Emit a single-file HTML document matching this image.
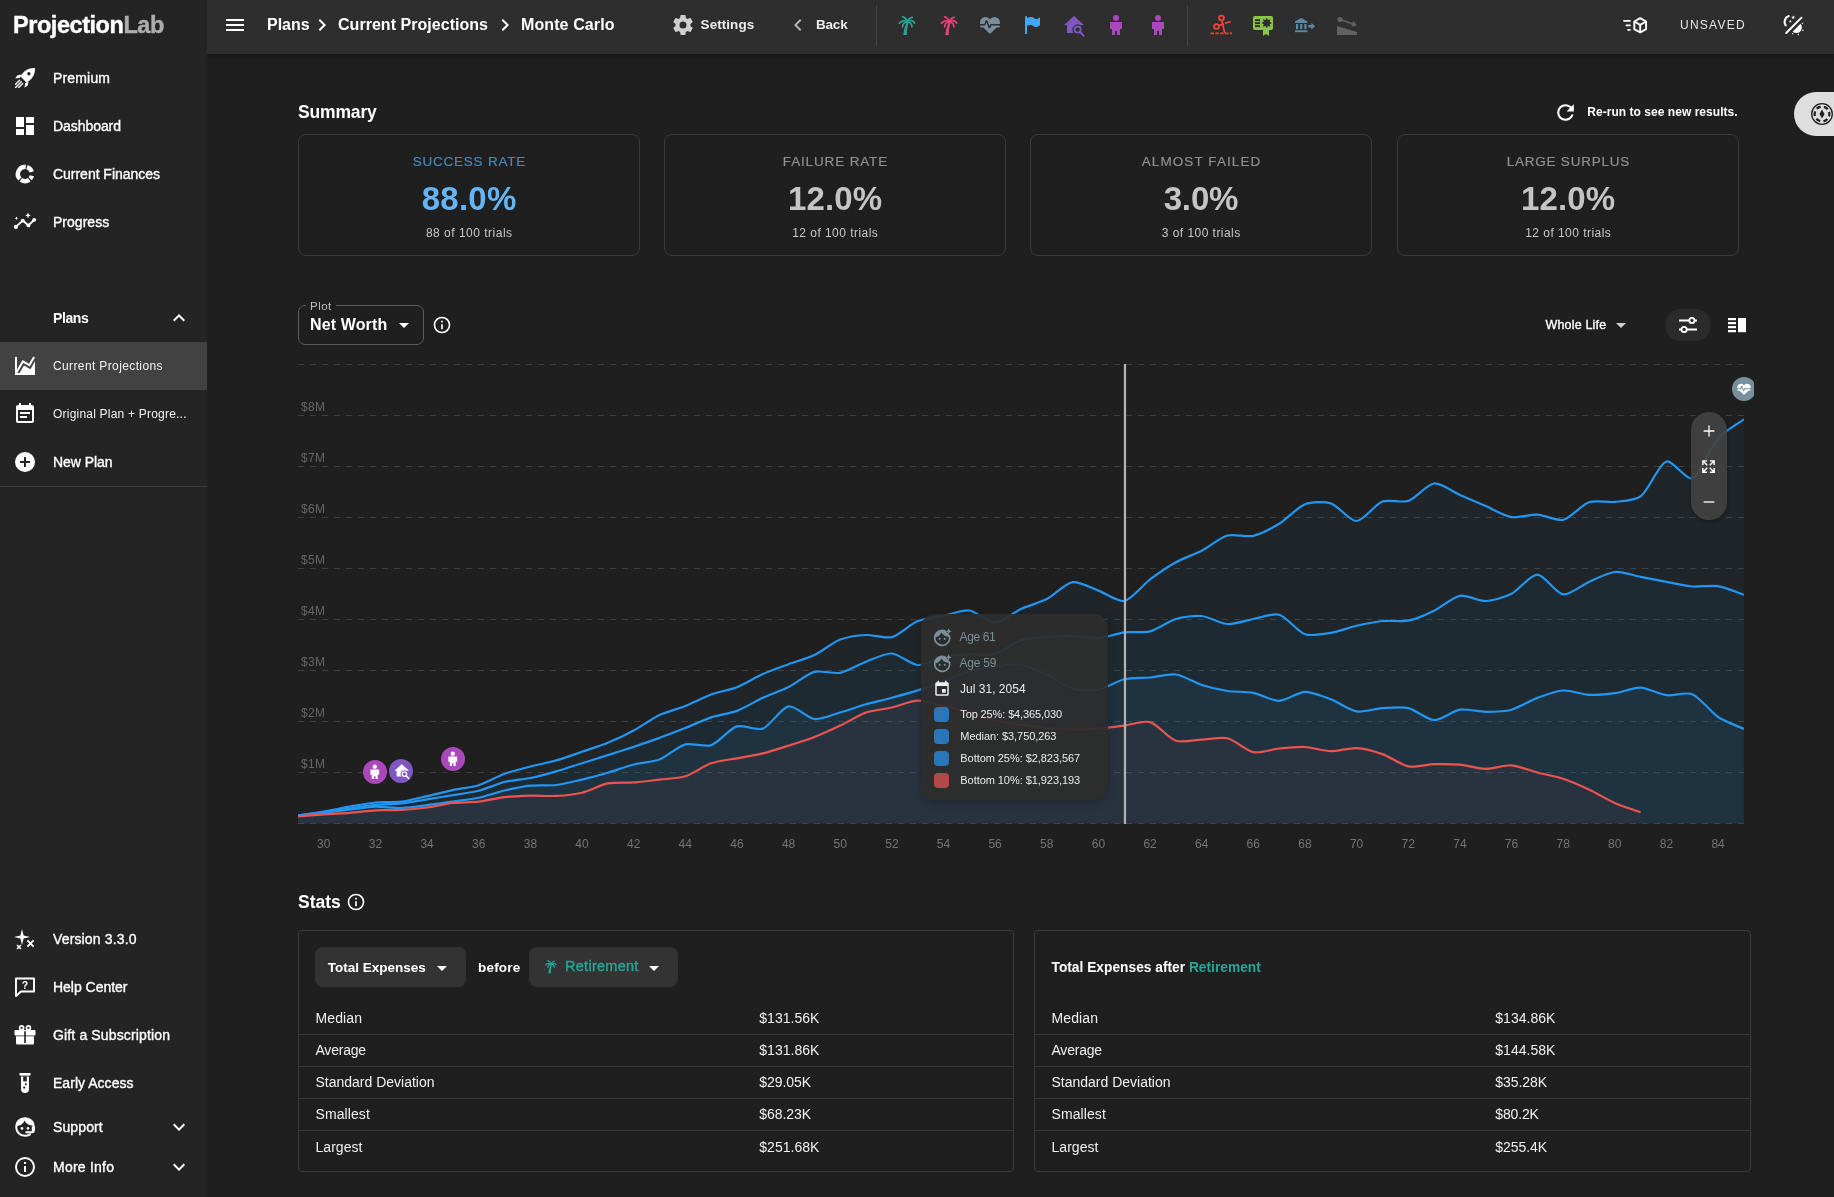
<!DOCTYPE html><html lang="en"><head><meta charset="utf-8"><title>ProjectionLab - Monte Carlo</title><style>
*{box-sizing:border-box;margin:0;padding:0}
html,body{width:1834px;height:1197px;overflow:hidden;background:#1f1f1f}
body{position:relative;font-family:"Liberation Sans",sans-serif;color:#fff;font-size:14px;-webkit-font-smoothing:antialiased}
.ic{position:absolute;display:block;overflow:visible}
.a{position:absolute;white-space:nowrap;line-height:1}
.t{position:absolute;white-space:nowrap;line-height:20px;height:20px;margin-top:-10px}
.m{-webkit-text-stroke:0.35px currentColor}
.m2{-webkit-text-stroke:0.2px currentColor}
.b{font-weight:700}
#sb{position:absolute;left:0;top:0;width:207px;height:1197px;background:#242424;z-index:5}
#tb{position:absolute;left:207px;top:0;width:1627px;height:54px;background:#2e2e2e;box-shadow:0 2px 4px -1px rgba(0,0,0,.2),0 4px 5px 0 rgba(0,0,0,.14),0 1px 10px 0 rgba(0,0,0,.12)}
#root{position:absolute;left:0;top:0;width:1834px;height:1197px;overflow:hidden;will-change:transform}
.card{position:absolute;border:1px solid #3b3b3b;border-radius:8px}
.ctr{position:absolute;left:0;right:0;text-align:center;white-space:nowrap;line-height:20px;height:20px;margin-top:-10px}
.row{position:absolute;left:0;right:0;height:1px;background:#383838}
.btn{position:absolute;background:#333;border-radius:8px}
</style></head><body><div id="root">
<div id="sb">
<div class="t b" style="left:13px;top:25px;font-size:23.5px;letter-spacing:-0.45px;line-height:30px;height:30px;margin-top:-15px;-webkit-text-stroke:0.4px currentColor">Projection<span style="color:#adadad">Lab</span></div>
<svg class="ic" style="left:13.0px;top:66.0px;" width="24" height="24" viewBox="0 0 24 24"><path d="M22,2 C15.5,1.8 10,5 7.6,10.6 L13.4,16.4 C19,14 22.2,8.5 22,2 Z" fill="#fff"/><circle cx="15.9" cy="7.8" r="1.7" fill="#242424"/><path d="M8.6,8.4 L4.4,9.3 L2.2,12.5 L7,11.8 Z M15.6,15.4 L14.7,19.6 L11.5,21.8 L12.2,17 Z" fill="#fff"/><path d="M6.6,14.3 L2.6,18.3 M8.2,15.8 L2.6,21.4 M9.7,17.4 L5.7,21.4" stroke="#fff" stroke-width="1.35" stroke-linecap="round" fill="none"/></svg>
<div class="t m" style="left:53px;top:78px;font-size:14px;letter-spacing:0.164px">Premium</div>
<svg class="ic" style="left:13.0px;top:114.0px;" width="24" height="24" viewBox="0 0 24 24"><path d="M13,3V9H21V3M13,21H21V11H13M3,21H11V15H3M3,13H11V3H3V13Z" fill="#fff"/></svg>
<div class="t m" style="left:53px;top:126px;font-size:14px;letter-spacing:-0.062px">Dashboard</div>
<svg class="ic" style="left:13.0px;top:162.0px;" width="24" height="24" viewBox="0 0 24 24"><path d="M13.96,5.18 A7.1,7.1 0 0,1 18.75,9.81 M18.89,13.72 A7.1,7.1 0 0,1 17.19,16.84 M16.27,17.67 A7.1,7.1 0 0,1 7.83,17.74 M6.89,16.93 A7.1,7.1 0 0,1 12.74,4.94" fill="none" stroke="#fff" stroke-width="4.4"/></svg>
<div class="t m" style="left:53px;top:174px;font-size:14px;letter-spacing:-0.026px">Current Finances</div>
<svg class="ic" style="left:13.0px;top:210.0px;" width="24" height="24" viewBox="0 0 24 24"><path d="M2.8,16.9 L9.75,10.6 L15.45,15.4 L21.3,9.8" stroke="#fff" stroke-width="1.9" fill="none" stroke-linejoin="round" stroke-linecap="round"/><circle cx="2.9" cy="16.9" r="2.1" fill="#fff"/><circle cx="9.75" cy="10.6" r="1.9" fill="#fff"/><circle cx="15.45" cy="15.4" r="1.9" fill="#fff"/><circle cx="21.2" cy="9.8" r="1.9" fill="#fff"/><path d="M15,2.6 l0.85,1.95 1.95,0.85 -1.95,0.85 -0.85,1.95 -0.85,-1.95 -1.95,-0.85 1.95,-0.85 Z" fill="#fff"/><path d="M3.4,6.4 l0.55,1.25 1.25,0.55 -1.25,0.55 -0.55,1.25 -0.55,-1.25 -1.25,-0.55 1.25,-0.55 Z" fill="#fff"/></svg>
<div class="t m" style="left:53px;top:222px;font-size:14px;letter-spacing:0.024px">Progress</div>
<div class="t b" style="left:53px;top:318px;font-size:14px;letter-spacing:-0.415px">Plans</div>
<svg class="ic" style="left:167.0px;top:306.0px;" width="24" height="24" viewBox="0 0 24 24"><path d="M7.41,15.41L12,10.83L16.59,15.41L18,14L12,8L6,14L7.41,15.41Z" fill="#fff"/></svg>
<div style="position:absolute;left:0;top:342px;width:207px;height:48px;background:#424242"></div>
<svg class="ic" style="left:13.0px;top:354.0px;" width="24" height="24" viewBox="0 0 24 24"><path d="M17.45,15.18L22,7.31V19L22,21H2V3H4V15.54L9.5,6L16,9.78L20.24,2.45L21.97,3.45L16.74,12.5L10.23,8.75L4.31,19H6.57L10.96,11.44L17.45,15.18Z" fill="#fff"/></svg>
<div class="t " style="left:53px;top:366px;font-size:12px;color:#f2f2f2;letter-spacing:0.377px">Current Projections</div>
<svg class="ic" style="left:13.0px;top:402.0px;" width="24" height="24" viewBox="0 0 24 24"><path d="M14,14H7V16H14M19,19H5V8H19M19,3H18V1H16V3H8V1H6V3H5C3.89,3 3,3.9 3,5V19A2,2 0 0,0 5,21H19A2,2 0 0,0 21,19V5A2,2 0 0,0 19,3M17,10H7V12H17V10Z" fill="#fff"/></svg>
<div class="t " style="left:53px;top:414px;font-size:12px;color:#f2f2f2;letter-spacing:0.212px">Original Plan + Progre...</div>
<svg class="ic" style="left:13.0px;top:450.0px;" width="24" height="24" viewBox="0 0 24 24"><path d="M17,13H13V17H11V13H7V11H11V7H13V11H17M12,2A10,10 0 0,0 2,12A10,10 0 0,0 12,22A10,10 0 0,0 22,12A10,10 0 0,0 12,2Z" fill="#fff"/></svg>
<div class="t m" style="left:53px;top:462px;font-size:14px;letter-spacing:-0.060px">New Plan</div>
<div style="position:absolute;left:0;top:486px;width:207px;height:1px;background:#3d3d3d"></div>
<svg class="ic" style="left:13.0px;top:927.0px;" width="24" height="24" viewBox="0 0 24 24"><path d="M9,2 L10.6,8.4 L17,10 L10.6,11.6 L9,18 L7.4,11.6 L1,10 L7.4,8.4 Z" fill="#fff"/><path d="M14.4,13.4 L20.6,19.6 M20.6,13.4 L14.4,19.6" stroke="#fff" stroke-width="1.8" fill="none"/><path d="M4,18 L8,22 M8,18 L4,22" stroke="#fff" stroke-width="1.5" fill="none"/></svg>
<div class="t m" style="left:53px;top:939px;font-size:14px;letter-spacing:0.147px">Version 3.3.0</div>
<svg class="ic" style="left:13.0px;top:975.0px;" width="24" height="24" viewBox="0 0 24 24"><path d="M3,3.5 H21 V16.5 H8 L3,21 Z" fill="none" stroke="#fff" stroke-width="1.9" stroke-linejoin="round"/><text x="12" y="13.6" font-family="Liberation Sans, sans-serif" font-weight="700" font-size="10.5" text-anchor="middle" fill="#fff">?</text></svg>
<div class="t m" style="left:53px;top:987px;font-size:14px;letter-spacing:-0.020px">Help Center</div>
<svg class="ic" style="left:13.0px;top:1023.0px;" width="24" height="24" viewBox="0 0 24 24"><rect x="1.5" y="7" width="21" height="5.4" rx="0.8" fill="#fff"/><path d="M3,13.2 H21 V20 A1.6,1.6 0 0,1 19.4,21.6 H4.6 A1.6,1.6 0 0,1 3,20 Z" fill="#fff"/><rect x="11.2" y="8.2" width="1.6" height="11.8" fill="#242424"/><circle cx="8.6" cy="4.8" r="2" fill="none" stroke="#fff" stroke-width="1.7"/><circle cx="15.4" cy="4.8" r="2" fill="none" stroke="#fff" stroke-width="1.7"/></svg>
<div class="t m" style="left:53px;top:1035px;font-size:14px;letter-spacing:0.145px">Gift a Subscription</div>
<svg class="ic" style="left:13.0px;top:1071.0px;" width="24" height="24" viewBox="0 0 24 24"><rect x="6.5" y="2" width="11" height="2.6" fill="#fff"/><path d="M8,5.4 H16 V18 A4,4 0 0,1 8,18 Z" fill="#fff"/><rect x="10.2" y="5.4" width="3.6" height="5" fill="#242424"/><circle cx="12.8" cy="13.2" r="1" fill="#242424"/><circle cx="11.2" cy="16.6" r="1.1" fill="#242424"/></svg>
<div class="t m" style="left:53px;top:1083px;font-size:14px;letter-spacing:0.033px">Early Access</div>
<svg class="ic" style="left:13.0px;top:1115.0px;" width="24" height="24" viewBox="0 0 24 24"><path d="M12,3.2 C6.6,3.2 3.2,7 3.2,12 C3.2,17 6.8,20.8 12,20.8 C14,20.8 15.6,20.3 17,19.4" fill="none" stroke="#fff" stroke-width="2" stroke-linecap="round"/><path d="M12,3.2 C17.4,3.2 20.8,7 20.8,12 V15" fill="none" stroke="#fff" stroke-width="2"/><path d="M3.4,11 C7.5,10.8 10.4,8.6 11.4,5.4 C13.2,8.8 16.6,10.8 20.6,10.6 L20.6,7 L14,3 L7,4 L3.4,8 Z" fill="#fff"/><circle cx="9" cy="13.4" r="1.3" fill="#fff"/><circle cx="15" cy="13.4" r="1.3" fill="#fff"/><path d="M12.5,18.2 H19.4 A2.4,2.4 0 0,0 21.8,15.8 V11.5 H18.8 V16.2 H12.5 Z" fill="#fff"/></svg>
<div class="t m" style="left:53px;top:1127px;font-size:14px;letter-spacing:0.109px">Support</div>
<svg class="ic" style="left:13.0px;top:1155.0px;" width="24" height="24" viewBox="0 0 24 24"><path d="M11,9H13V7H11M12,20C7.59,20 4,16.41 4,12C4,7.59 7.59,4 12,4C16.41,4 20,7.59 20,12C20,16.41 16.41,20 12,20M12,2A10,10 0 0,0 2,12A10,10 0 0,0 12,22A10,10 0 0,0 22,12A10,10 0 0,0 12,2M11,17H13V11H11V17Z" fill="#fff"/></svg>
<div class="t m" style="left:53px;top:1167px;font-size:14px;letter-spacing:0.232px">More Info</div>
<svg class="ic" style="left:167.0px;top:1115.0px;" width="24" height="24" viewBox="0 0 24 24"><path d="M7.41,8.58L12,13.17L16.59,8.58L18,10L12,16L6,10L7.41,8.58Z" fill="#fff"/></svg>
<svg class="ic" style="left:167.0px;top:1155.0px;" width="24" height="24" viewBox="0 0 24 24"><path d="M7.41,8.58L12,13.17L16.59,8.58L18,10L12,16L6,10L7.41,8.58Z" fill="#fff"/></svg>
</div>
<div id="tb"></div>
<svg class="ic" style="left:223.0px;top:13.0px;" width="24" height="24" viewBox="0 0 24 24"><path d="M3,6H21V8H3V6M3,11H21V13H3V11M3,16H21V18H3V16Z" fill="#fff"/></svg>
<div class="t b" style="left:267px;top:25px;font-size:16px;letter-spacing:0.003px">Plans</div>
<svg class="ic" style="left:310.0px;top:13.0px;" width="24" height="24" viewBox="0 0 24 24"><path d="M8.59,16.58L13.17,12L8.59,7.41L10,6L16,12L10,18L8.59,16.58Z" fill="#fff"/></svg>
<div class="t b" style="left:338px;top:25px;font-size:16px;letter-spacing:0.036px">Current Projections</div>
<svg class="ic" style="left:493.0px;top:13.0px;" width="24" height="24" viewBox="0 0 24 24"><path d="M8.59,16.58L13.17,12L8.59,7.41L10,6L16,12L10,18L8.59,16.58Z" fill="#fff"/></svg>
<div class="t b" style="left:521px;top:25px;font-size:16px;letter-spacing:0.105px">Monte Carlo</div>
<svg class="ic" style="left:671.0px;top:13.0px;" width="24" height="24" viewBox="0 0 24 24"><path d="M12,15.5A3.5,3.5 0 0,1 8.5,12A3.5,3.5 0 0,1 12,8.5A3.5,3.5 0 0,1 15.5,12A3.5,3.5 0 0,1 12,15.5M19.43,12.97C19.47,12.65 19.5,12.33 19.5,12C19.5,11.67 19.47,11.34 19.43,11L21.54,9.37C21.73,9.22 21.78,8.95 21.66,8.73L19.66,5.27C19.54,5.05 19.27,4.96 19.05,5.05L16.56,6.05C16.04,5.66 15.5,5.32 14.87,5.07L14.5,2.42C14.46,2.18 14.25,2 14,2H10C9.75,2 9.54,2.18 9.5,2.42L9.13,5.07C8.5,5.32 7.96,5.66 7.44,6.05L4.95,5.05C4.73,4.96 4.46,5.05 4.34,5.27L2.34,8.73C2.21,8.95 2.27,9.22 2.46,9.37L4.57,11C4.53,11.34 4.5,11.67 4.5,12C4.5,12.33 4.53,12.65 4.57,12.97L2.46,14.63C2.27,14.78 2.21,15.05 2.34,15.27L4.34,18.73C4.46,18.95 4.73,19.03 4.95,18.95L7.44,17.94C7.96,18.34 8.5,18.68 9.13,18.93L9.5,21.58C9.54,21.82 9.75,22 10,22H14C14.25,22 14.46,21.82 14.5,21.58L14.87,18.93C15.5,18.67 16.04,18.34 16.56,17.94L19.05,18.95C19.27,19.03 19.54,18.95 19.66,18.73L21.66,15.27C21.78,15.05 21.73,14.78 21.54,14.63L19.43,12.97Z" fill="#cfcfcf"/></svg>
<div class="t b" style="left:700.6px;top:24.8px;font-size:13.5px;color:#ececec;letter-spacing:0.048px">Settings</div>
<svg class="ic" style="left:786.3px;top:13.0px;" width="24" height="24" viewBox="0 0 24 24"><path d="M15.41,16.58L10.83,12L15.41,7.41L14,6L8,12L14,18L15.41,16.58Z" fill="#b4b4b4"/></svg>
<div class="t b" style="left:816px;top:24.8px;font-size:13.5px;color:#ececec;letter-spacing:-0.194px">Back</div>
<div style="position:absolute;left:876px;top:5px;width:1px;height:41px;background:#454545"></div>
<svg class="ic" style="left:894.0px;top:13.0px;" width="24" height="24" viewBox="0 0 24 24"><g fill="none" stroke="#26a69a" stroke-width="1.7" stroke-linecap="round"><path d="M13.3,9 C11,7 7.4,7.4 5.4,10.2"/><path d="M13.3,9 C10.6,9 8.8,11 8.6,13.8"/><path d="M13.3,9 C15.4,6.9 18.9,7.2 20.6,10"/><path d="M13.3,9 C16.1,9.2 17.8,11.2 17.9,13.8"/><path d="M13.3,9 C12.8,6.5 11,4.5 8.6,3.8"/><path d="M13.3,9 C14,6.6 15.8,4.9 18.2,4.4"/></g><path d="M9.2,22 C9.9,17 11.2,12.6 12.6,9.3 L14.5,10 C13.4,13.4 12.7,17.6 12.8,22 Z" fill="#26a69a"/></svg>
<svg class="ic" style="left:936.0px;top:13.0px;" width="24" height="24" viewBox="0 0 24 24"><g fill="none" stroke="#ec407a" stroke-width="1.7" stroke-linecap="round"><path d="M13.3,9 C11,7 7.4,7.4 5.4,10.2"/><path d="M13.3,9 C10.6,9 8.8,11 8.6,13.8"/><path d="M13.3,9 C15.4,6.9 18.9,7.2 20.6,10"/><path d="M13.3,9 C16.1,9.2 17.8,11.2 17.9,13.8"/><path d="M13.3,9 C12.8,6.5 11,4.5 8.6,3.8"/><path d="M13.3,9 C14,6.6 15.8,4.9 18.2,4.4"/></g><path d="M9.2,22 C9.9,17 11.2,12.6 12.6,9.3 L14.5,10 C13.4,13.4 12.7,17.6 12.8,22 Z" fill="#ec407a"/></svg>
<svg class="ic" style="left:978.0px;top:13.0px;" width="24" height="24" viewBox="0 0 24 24"><path d="M7.5,4A5.5,5.5 0 0,0 2,9.5C2,10 2.09,10.5 2.22,11H6.3L7.57,7.63C7.87,6.83 9.05,6.75 9.43,7.63L11.5,13L12.09,11.58C12.22,11.25 12.57,11 13,11H21.78C21.91,10.5 22,10 22,9.5A5.5,5.5 0 0,0 16.5,4C14.64,4 13,4.93 12,6.34C11,4.93 9.36,4 7.5,4V4M3,12.5A1,1 0 0,0 2,13.5A1,1 0 0,0 3,14.5H5.44L11,20C12,20.9 12,20.9 13,20L18.56,14.5H21A1,1 0 0,0 22,13.5A1,1 0 0,0 21,12.5H13.4L12.47,14.8C12.07,15.81 10.92,15.67 10.55,14.83L8.5,9.5L7.54,11.83C7.39,12.21 7.05,12.5 6.6,12.5H3Z" fill="#78909c"/></svg>
<svg class="ic" style="left:1020.0px;top:13.0px;" width="24" height="24" viewBox="0 0 24 24"><path d="M6,3A1,1 0 0,1 7,4V4.88C8.06,4.44 9.5,4 11,4C14,4 14,6 16,6C19,6 20,4 20,4V12C20,12 19,14 16,14C13,14 13,12 11,12C8,12 7,13 7,13V21H5V4A1,1 0 0,1 6,3Z" fill="#42a5f5"/></svg>
<svg class="ic" style="left:1062.0px;top:13.0px;" width="24" height="24" viewBox="0 0 24 24"><path d="M12,3 L2,12 H5 V20 H13 V14 H19 V12 H22 Z" fill="#7e57c2"/><circle cx="15.7" cy="16.6" r="5.3" fill="#2e2e2e"/><circle cx="15.7" cy="16.6" r="3.1" fill="none" stroke="#7e57c2" stroke-width="1.8"/><path d="M18,19 L21.6,22.6" stroke="#7e57c2" stroke-width="2" stroke-linecap="round"/></svg>
<svg class="ic" style="left:1104.0px;top:13.0px;" width="24" height="24" viewBox="0 0 24 24"><path d="M12,2A3,3 0 0,1 15,5A3,3 0 0,1 12,8A3,3 0 0,1 9,5A3,3 0 0,1 12,2M11,22H8V16H6V9H18V16H16V22H13V18H11V22Z" fill="#ab47bc"/></svg>
<svg class="ic" style="left:1146.0px;top:13.0px;" width="24" height="24" viewBox="0 0 24 24"><path d="M12,2A3,3 0 0,1 15,5A3,3 0 0,1 12,8A3,3 0 0,1 9,5A3,3 0 0,1 12,2M11,22H8V16H6V9H18V16H16V22H13V18H11V22Z" fill="#ab47bc"/></svg>
<div style="position:absolute;left:1187px;top:5px;width:1px;height:41px;background:#454545"></div>
<svg class="ic" style="left:1209.0px;top:13.0px;" width="24" height="24" viewBox="0 0 24 24"><g fill="none" stroke="#f44336" stroke-width="1.8" stroke-linecap="round"><circle cx="12.5" cy="5" r="2.4"/><circle cx="7.5" cy="13.5" r="2.4"/><path d="M12.8,7.6 L15.6,19.4"/><path d="M9.8,12.6 L14.2,11"/><path d="M16.5,10 L21,8.8"/></g><path d="M1.6,20.4 H23" stroke="#f44336" stroke-width="1.8" stroke-dasharray="3.4 1.4" fill="none"/></svg>
<svg class="ic" style="left:1251.0px;top:13.0px;" width="24" height="24" viewBox="0 0 24 24"><rect x="2" y="3" width="20" height="14" rx="2" fill="#8bc34a"/><path d="M12,17 L12,23 L15,21 L18,23 L18,17 Z" fill="#8bc34a"/><rect x="4" y="6.2" width="5" height="1.9" fill="#2e2e2e"/><rect x="4" y="9.2" width="5" height="1.9" fill="#2e2e2e"/><rect x="4" y="12.2" width="5" height="1.9" fill="#2e2e2e"/><polygon points="15.70,4.70 16.92,7.04 19.45,6.25 18.66,8.78 21.00,10.00 18.66,11.22 19.45,13.75 16.92,12.96 15.70,15.30 14.48,12.96 11.95,13.75 12.74,11.22 10.40,10.00 12.74,8.78 11.95,6.25 14.48,7.04" fill="#2e2e2e"/></svg>
<svg class="ic" style="left:1293.0px;top:13.0px;" width="24" height="24" viewBox="0 0 24 24"><path d="M8.2,5 L2,8.6 V9.9 H14.4 V8.6 Z" fill="#5c8aa6"/><rect x="3" y="11" width="2.1" height="5.2" fill="#5c8aa6"/><rect x="7.15" y="11" width="2.1" height="5.2" fill="#5c8aa6"/><rect x="11.3" y="11" width="2.1" height="5.2" fill="#5c8aa6"/><rect x="2" y="17.3" width="12.4" height="1.9" fill="#5c8aa6"/><path d="M15.2,12 H18.4 V9.8 L22,13.2 L18.4,16.6 V14.4 H15.2 Z" fill="#5c8aa6"/></svg>
<svg class="ic" style="left:1335.0px;top:13.0px;" width="24" height="24" viewBox="0 0 24 24"><path d="M2,13 L22,19 V22 H2 Z" fill="#616161"/><circle cx="5" cy="6.5" r="2.6" fill="#616161"/><path d="M6,6.8 L19,11.6" stroke="#616161" stroke-width="1.6" fill="none"/><path d="M18.2,7.8 L22,12.6 L16.4,13.4 Z" fill="#616161"/></svg>
<svg class="ic" style="left:1623.0px;top:12.5px;" width="24" height="24" viewBox="0 0 24 24"><g fill="none" stroke="#fff" stroke-width="1.9" stroke-linejoin="round"><path d="M17.2,5.1 L23.1,8.5 V16.1 L17.2,19.5 L11.3,16.1 V8.5 Z"/><path d="M11.3,8.5 L17.2,11.9 L23.1,8.5 M17.2,11.9 V19.5"/></g><path d="M0.3,7.9 H7.6 M2.7,12.4 H7.6 M4.4,16.9 H7.6" stroke="#fff" stroke-width="1.9" fill="none"/></svg>
<div class="t " style="left:1680px;top:24.5px;font-size:12px;color:#e6e6e6;letter-spacing:1.246px">UNSAVED</div>
<svg class="ic" style="left:1782.0px;top:12.5px;" width="24" height="24" viewBox="0 0 24 24"><path d="M4.2,20 L19.5,4.7" stroke="#fff" stroke-width="1.9" stroke-linecap="round" fill="none"/><path d="M6.7,3.1 A6,6 0 0,0 3.7,12.3" fill="none" stroke="#fff" stroke-width="2.1" stroke-linecap="round"/><path d="M11.2,2.4 l0.55,1.3 1.4,0.1 -1.1,0.9 0.35,1.4 -1.2,-0.75 -1.2,0.75 0.35,-1.4 -1.1,-0.9 1.4,-0.1 Z" fill="#fff"/><path d="M8.3,6.9 l0.4,0.95 1,0.1 -0.8,0.65 0.3,1 -0.9,-0.55 -0.9,0.55 0.3,-1 -0.8,-0.65 1,-0.1 Z" fill="#fff"/><path d="M10.6,18.7 L18.5,10.8 A5.6,5.6 0 0,1 10.6,18.7 Z" fill="#fff"/><path d="M19.6,9.7 l1.7,0.3 -0.9,1.6 Z M20.9,16.2 l1,1.5 -1.8,0.3 Z M17,20.6 l-0.2,1.8 -1.5,-1 Z M11.6,20.5 l-1.2,1.3 -0.6,-1.7 Z" fill="#fff"/></svg>
<div style="position:absolute;left:1794px;top:92px;width:60px;height:44px;border-radius:22px;background:#dedede"></div>
<svg class="ic" style="left:1810.0px;top:102.0px;" width="24" height="24" viewBox="0 0 24 24"><circle cx="12" cy="12" r="10.3" fill="none" stroke="#1e1e1e" stroke-width="1.3"/><circle cx="12" cy="12" r="7.4" fill="none" stroke="#1e1e1e" stroke-width="2.2" stroke-dasharray="4.6 3.15" transform="rotate(-17 12 12)"/><path d="M12,7.4 L14.5,12 L12,16.6 L9.5,12 Z" fill="#1e1e1e"/></svg>
<div class="t b" style="left:298px;top:112px;font-size:17.5px;letter-spacing:-0.161px">Summary</div>
<svg class="ic" style="left:1552.7px;top:99.5px;" width="25" height="25" viewBox="0 0 24 24"><path d="M17.65,6.35C16.2,4.9 14.21,4 12,4A8,8 0 0,0 4,12A8,8 0 0,0 12,20C15.73,20 18.84,17.45 19.73,14H17.65C16.83,16.33 14.61,18 12,18A6,6 0 0,1 6,12A6,6 0 0,1 12,6C13.66,6 15.14,6.69 16.22,7.78L13,11H20V4L17.65,6.35Z" fill="#fff"/></svg>
<div class="t b" style="left:1587.3px;top:112px;font-size:12px;letter-spacing:0.037px">Re-run to see new results.</div>
<div class="card" style="left:298px;top:134px;width:342px;height:122px">
<div class="ctr m2" style="top:26.6px;padding-left:0.752px;font-size:13.5px;color:#4a86b8;letter-spacing:0.752px"><span>SUCCESS RATE</span></div>
<div class="ctr b" style="top:64px;padding-left:0.230px;font-size:33px;line-height:40px;height:40px;margin-top:-20px;color:#64b5f6;letter-spacing:0.230px"><span>88.0%</span></div>
<div class="ctr " style="top:98px;padding-left:0.499px;font-size:12px;color:#c8c8c8;letter-spacing:0.499px"><span>88 of 100 trials</span></div>
</div>
<div class="card" style="left:664px;top:134px;width:342px;height:122px">
<div class="ctr m2" style="top:26.6px;padding-left:0.852px;font-size:13.5px;color:#8f8f8f;letter-spacing:0.852px"><span>FAILURE RATE</span></div>
<div class="ctr b" style="top:64px;padding-left:0.105px;font-size:33px;line-height:40px;height:40px;margin-top:-20px;color:#c4c4c4;letter-spacing:0.105px"><span>12.0%</span></div>
<div class="ctr " style="top:98px;padding-left:0.459px;font-size:12px;color:#c8c8c8;letter-spacing:0.459px"><span>12 of 100 trials</span></div>
</div>
<div class="card" style="left:1030px;top:134px;width:342px;height:122px">
<div class="ctr m2" style="top:26.6px;padding-left:1.088px;font-size:13.5px;color:#8f8f8f;letter-spacing:1.088px"><span>ALMOST FAILED</span></div>
<div class="ctr b" style="top:64px;padding-left:-0.140px;font-size:33px;line-height:40px;height:40px;margin-top:-20px;color:#c4c4c4;letter-spacing:-0.140px"><span>3.0%</span></div>
<div class="ctr " style="top:98px;padding-left:0.454px;font-size:12px;color:#c8c8c8;letter-spacing:0.454px"><span>3 of 100 trials</span></div>
</div>
<div class="card" style="left:1397px;top:134px;width:342px;height:122px">
<div class="ctr m2" style="top:26.6px;padding-left:0.775px;font-size:13.5px;color:#8f8f8f;letter-spacing:0.775px"><span>LARGE SURPLUS</span></div>
<div class="ctr b" style="top:64px;padding-left:0.105px;font-size:33px;line-height:40px;height:40px;margin-top:-20px;color:#c4c4c4;letter-spacing:0.105px"><span>12.0%</span></div>
<div class="ctr " style="top:98px;padding-left:0.459px;font-size:12px;color:#c8c8c8;letter-spacing:0.459px"><span>12 of 100 trials</span></div>
</div>
<div style="position:absolute;left:298px;top:305px;width:126px;height:40px;border:1px solid #5c5c5c;border-radius:7px"></div>
<div style="position:absolute;left:306px;top:300px;width:30px;height:10px;background:#1f1f1f"></div>
<div class="t " style="left:310px;top:305.5px;font-size:11.5px;color:#bdbdbd;letter-spacing:0.491px">Plot</div>
<div class="t b" style="left:310px;top:324.5px;font-size:16px;letter-spacing:0.132px">Net Worth</div>
<svg class="ic" style="left:392.0px;top:313.0px;" width="24" height="24" viewBox="0 0 24 24"><path d="M7,10L12,15L17,10H7Z" fill="#fff"/></svg>
<svg class="ic" style="left:432.0px;top:315.0px;" width="20" height="20" viewBox="0 0 24 24"><path d="M11,9H13V7H11M12,20C7.59,20 4,16.41 4,12C4,7.59 7.59,4 12,4C16.41,4 20,7.59 20,12C20,16.41 16.41,20 12,20M12,2A10,10 0 0,0 2,12A10,10 0 0,0 12,22A10,10 0 0,0 22,12A10,10 0 0,0 12,2M11,17H13V11H11V17Z" fill="#fff"/></svg>
<div class="t m" style="left:1545.4px;top:325px;font-size:12.5px;letter-spacing:0.193px">Whole Life</div>
<svg class="ic" style="left:1609.0px;top:313.0px;" width="24" height="24" viewBox="0 0 24 24"><path d="M7,10L12,15L17,10H7Z" fill="#d0d0d0"/></svg>
<div style="position:absolute;left:1665px;top:309px;width:46px;height:32px;border-radius:16px;background:#2b2b2b"></div>
<svg class="ic" style="left:1675.5px;top:313.0px;" width="24" height="24" viewBox="0 0 24 24"><path d="M3,7.5 H12.9 M18.9,7.5 H21 M3,16.5 H5.1 M11.1,16.5 H21" stroke="#fff" stroke-width="1.9" fill="none"/><circle cx="15.9" cy="7.5" r="2.6" fill="none" stroke="#fff" stroke-width="1.8"/><circle cx="8.1" cy="16.5" r="2.6" fill="none" stroke="#fff" stroke-width="1.8"/></svg>
<svg class="ic" style="left:1724.5px;top:313.0px;" width="24" height="24" viewBox="0 0 24 24"><path d="M3,5 H11 V7.2 H3 Z M3,9 H11 V11.2 H3 Z M3,13 H11 V15.2 H3 Z M3,17 H11 V19.2 H3 Z" fill="#fff"/><rect x="13" y="5" width="8" height="14.2" fill="#fff"/></svg>
<svg class="ic" style="left:290px;top:355px" width="1470" height="505" viewBox="0 0 1470 505"><defs><clipPath id="plot"><rect x="8" y="0" width="1446" height="469"/></clipPath></defs><line x1="8" x2="1454" y1="468.5" y2="468.5" stroke="#3f3f3f" stroke-width="1" stroke-dasharray="6 6"/><line x1="8" x2="1454" y1="417.5" y2="417.5" stroke="#3f3f3f" stroke-width="1" stroke-dasharray="6 6"/><line x1="8" x2="1454" y1="366.5" y2="366.5" stroke="#3f3f3f" stroke-width="1" stroke-dasharray="6 6"/><line x1="8" x2="1454" y1="315.5" y2="315.5" stroke="#3f3f3f" stroke-width="1" stroke-dasharray="6 6"/><line x1="8" x2="1454" y1="264.5" y2="264.5" stroke="#3f3f3f" stroke-width="1" stroke-dasharray="6 6"/><line x1="8" x2="1454" y1="213.5" y2="213.5" stroke="#3f3f3f" stroke-width="1" stroke-dasharray="6 6"/><line x1="8" x2="1454" y1="162.5" y2="162.5" stroke="#3f3f3f" stroke-width="1" stroke-dasharray="6 6"/><line x1="8" x2="1454" y1="111.5" y2="111.5" stroke="#3f3f3f" stroke-width="1" stroke-dasharray="6 6"/><line x1="8" x2="1454" y1="60.5" y2="60.5" stroke="#3f3f3f" stroke-width="1" stroke-dasharray="6 6"/><line x1="8" x2="1454" y1="9.5" y2="9.5" stroke="#3f3f3f" stroke-width="1" stroke-dasharray="6 6"/><text x="11" y="413.0" font-size="12" letter-spacing="0.3" fill="#666" font-family="Liberation Sans, sans-serif">$1M</text><text x="11" y="362.0" font-size="12" letter-spacing="0.3" fill="#666" font-family="Liberation Sans, sans-serif">$2M</text><text x="11" y="311.0" font-size="12" letter-spacing="0.3" fill="#666" font-family="Liberation Sans, sans-serif">$3M</text><text x="11" y="260.0" font-size="12" letter-spacing="0.3" fill="#666" font-family="Liberation Sans, sans-serif">$4M</text><text x="11" y="209.0" font-size="12" letter-spacing="0.3" fill="#666" font-family="Liberation Sans, sans-serif">$5M</text><text x="11" y="158.0" font-size="12" letter-spacing="0.3" fill="#666" font-family="Liberation Sans, sans-serif">$6M</text><text x="11" y="107.0" font-size="12" letter-spacing="0.3" fill="#666" font-family="Liberation Sans, sans-serif">$7M</text><text x="11" y="56.0" font-size="12" letter-spacing="0.3" fill="#666" font-family="Liberation Sans, sans-serif">$8M</text><text x="33.8" y="493.20000000000005" font-size="12" fill="#747474" text-anchor="middle" font-family="Liberation Sans, sans-serif">30</text><text x="85.5" y="493.20000000000005" font-size="12" fill="#747474" text-anchor="middle" font-family="Liberation Sans, sans-serif">32</text><text x="137.1" y="493.20000000000005" font-size="12" fill="#747474" text-anchor="middle" font-family="Liberation Sans, sans-serif">34</text><text x="188.7" y="493.20000000000005" font-size="12" fill="#747474" text-anchor="middle" font-family="Liberation Sans, sans-serif">36</text><text x="240.4" y="493.20000000000005" font-size="12" fill="#747474" text-anchor="middle" font-family="Liberation Sans, sans-serif">38</text><text x="292.0" y="493.20000000000005" font-size="12" fill="#747474" text-anchor="middle" font-family="Liberation Sans, sans-serif">40</text><text x="343.7" y="493.20000000000005" font-size="12" fill="#747474" text-anchor="middle" font-family="Liberation Sans, sans-serif">42</text><text x="395.3" y="493.20000000000005" font-size="12" fill="#747474" text-anchor="middle" font-family="Liberation Sans, sans-serif">44</text><text x="446.9" y="493.20000000000005" font-size="12" fill="#747474" text-anchor="middle" font-family="Liberation Sans, sans-serif">46</text><text x="498.6" y="493.20000000000005" font-size="12" fill="#747474" text-anchor="middle" font-family="Liberation Sans, sans-serif">48</text><text x="550.2" y="493.20000000000005" font-size="12" fill="#747474" text-anchor="middle" font-family="Liberation Sans, sans-serif">50</text><text x="601.9" y="493.20000000000005" font-size="12" fill="#747474" text-anchor="middle" font-family="Liberation Sans, sans-serif">52</text><text x="653.5" y="493.20000000000005" font-size="12" fill="#747474" text-anchor="middle" font-family="Liberation Sans, sans-serif">54</text><text x="705.1" y="493.20000000000005" font-size="12" fill="#747474" text-anchor="middle" font-family="Liberation Sans, sans-serif">56</text><text x="756.8" y="493.20000000000005" font-size="12" fill="#747474" text-anchor="middle" font-family="Liberation Sans, sans-serif">58</text><text x="808.4" y="493.20000000000005" font-size="12" fill="#747474" text-anchor="middle" font-family="Liberation Sans, sans-serif">60</text><text x="860.1" y="493.20000000000005" font-size="12" fill="#747474" text-anchor="middle" font-family="Liberation Sans, sans-serif">62</text><text x="911.7" y="493.20000000000005" font-size="12" fill="#747474" text-anchor="middle" font-family="Liberation Sans, sans-serif">64</text><text x="963.3" y="493.20000000000005" font-size="12" fill="#747474" text-anchor="middle" font-family="Liberation Sans, sans-serif">66</text><text x="1015.0" y="493.20000000000005" font-size="12" fill="#747474" text-anchor="middle" font-family="Liberation Sans, sans-serif">68</text><text x="1066.6" y="493.20000000000005" font-size="12" fill="#747474" text-anchor="middle" font-family="Liberation Sans, sans-serif">70</text><text x="1118.3" y="493.20000000000005" font-size="12" fill="#747474" text-anchor="middle" font-family="Liberation Sans, sans-serif">72</text><text x="1169.9" y="493.20000000000005" font-size="12" fill="#747474" text-anchor="middle" font-family="Liberation Sans, sans-serif">74</text><text x="1221.5" y="493.20000000000005" font-size="12" fill="#747474" text-anchor="middle" font-family="Liberation Sans, sans-serif">76</text><text x="1273.2" y="493.20000000000005" font-size="12" fill="#747474" text-anchor="middle" font-family="Liberation Sans, sans-serif">78</text><text x="1324.8" y="493.20000000000005" font-size="12" fill="#747474" text-anchor="middle" font-family="Liberation Sans, sans-serif">80</text><text x="1376.5" y="493.20000000000005" font-size="12" fill="#747474" text-anchor="middle" font-family="Liberation Sans, sans-serif">82</text><text x="1428.1" y="493.20000000000005" font-size="12" fill="#747474" text-anchor="middle" font-family="Liberation Sans, sans-serif">84</text><g clip-path="url(#plot)"><path d="M8.0,460.5C15.0,459.4 26.9,457.7 33.8,456.5C40.8,455.3 52.7,452.9 59.6,451.7C66.6,450.5 78.4,448.2 85.5,447.5C92.4,446.8 104.4,447.6 111.3,446.7C118.3,445.8 130.1,442.7 137.1,441.1C144.1,439.5 155.9,436.6 162.9,435.1C169.9,433.6 182.0,432.3 188.7,430.2C196.0,427.9 207.4,421.4 214.6,418.8C221.4,416.3 233.4,413.3 240.4,411.5C247.3,409.7 259.3,407.4 266.2,405.4C273.3,403.4 285.1,399.2 292.0,396.8C299.0,394.4 311.0,390.6 317.8,387.8C325.0,384.9 336.9,379.2 343.7,375.5C350.8,371.7 362.2,363.5 369.5,360.0C376.1,356.9 388.4,353.7 395.3,351.0C402.4,348.2 414.0,342.1 421.1,339.5C427.9,337.0 440.2,334.8 446.9,332.2C454.2,329.3 465.6,322.3 472.8,319.1C479.6,316.1 491.6,311.8 498.6,309.2C505.5,306.6 517.8,303.3 524.4,300.1C531.7,296.6 542.8,287.5 550.2,284.6C556.7,282.1 569.0,280.3 576.0,280.0C583.0,279.7 595.4,283.8 601.9,282.1C609.4,280.1 620.2,269.2 627.7,266.1C634.2,263.4 646.5,262.2 653.5,260.8C660.5,259.4 672.6,254.6 679.3,255.5C686.6,256.5 698.2,267.9 705.1,267.7C712.2,267.5 723.8,257.3 731.0,254.0C737.7,250.9 750.2,247.5 756.8,244.1C764.1,240.3 775.2,228.4 782.6,227.2C789.1,226.1 801.5,233.1 808.4,235.6C815.5,238.2 827.9,247.4 834.2,246.0C841.9,244.3 852.8,229.9 860.1,224.4C866.7,219.4 878.6,211.3 885.9,207.2C892.5,203.5 904.9,199.2 911.7,195.7C918.9,192.0 930.0,182.6 937.5,180.5C944.0,178.7 956.7,182.4 963.3,180.9C970.7,179.2 982.6,172.8 989.2,168.8C996.6,164.3 1007.2,152.4 1015.0,149.3C1021.2,146.9 1034.5,146.4 1040.8,148.4C1048.4,150.9 1059.8,166.3 1066.6,166.0C1073.7,165.7 1084.7,149.5 1092.4,146.5C1098.6,144.1 1111.9,148.1 1118.3,145.9C1125.9,143.2 1136.8,129.3 1144.1,128.5C1150.7,127.7 1162.9,136.8 1169.9,139.9C1176.9,142.9 1188.7,148.1 1195.7,151.1C1202.7,154.1 1214.3,160.9 1221.5,162.1C1228.2,163.2 1240.4,159.2 1247.4,159.6C1254.4,160.0 1266.8,166.3 1273.2,164.8C1280.7,163.0 1291.4,149.8 1299.0,147.2C1305.3,145.0 1317.9,147.7 1324.8,146.9C1331.9,146.1 1345.4,145.5 1350.6,141.4C1359.3,134.6 1368.3,109.4 1376.5,106.5C1382.2,104.5 1396.8,125.8 1402.3,123.3C1410.7,119.5 1419.8,92.8 1428.1,83.3C1433.7,76.9 1446.9,69.4 1453.9,64.3L1453.9,468.5L8.0,468.5Z" fill="#2196f3" fill-opacity="0.05"/><path d="M8.0,460.7C15.0,459.7 26.9,458.1 33.8,457.1C40.8,456.1 52.7,454.4 59.6,453.4C66.6,452.4 78.5,450.6 85.5,449.9C92.4,449.2 104.3,449.2 111.3,448.4C118.3,447.6 130.1,445.4 137.1,444.3C144.1,443.2 156.0,441.3 162.9,440.2C169.9,439.1 181.9,437.5 188.7,435.8C195.9,434.0 207.4,428.8 214.6,427.0C221.4,425.3 233.5,424.4 240.4,423.0C247.4,421.6 259.3,418.4 266.2,416.4C273.2,414.4 285.0,410.4 292.0,408.2C299.0,406.0 310.9,402.3 317.8,400.1C324.8,397.9 336.7,394.2 343.7,391.9C350.7,389.6 362.5,385.4 369.5,382.9C376.5,380.3 388.4,375.9 395.3,373.1C402.3,370.3 414.0,364.8 421.1,362.4C427.9,360.1 440.3,358.4 446.9,355.9C454.2,353.1 465.7,346.1 472.8,342.8C479.6,339.6 491.8,335.4 498.6,332.0C505.8,328.4 516.9,319.0 524.4,316.9C530.9,315.1 543.5,319.1 550.2,317.8C557.5,316.4 568.9,309.4 576.0,306.7C582.9,304.1 595.0,298.1 601.9,298.5C609.0,299.0 620.6,309.5 627.7,310.0C634.5,310.4 646.4,303.3 653.5,301.8C660.3,300.4 672.3,299.7 679.3,299.3C686.3,298.9 698.6,300.8 705.1,299.0C712.5,297.0 723.6,287.8 731.0,285.4C737.5,283.2 749.8,282.7 756.8,282.1C763.7,281.5 775.6,280.8 782.6,281.0C789.6,281.2 801.5,283.9 808.4,283.4C815.5,282.9 827.2,278.3 834.2,277.3C841.1,276.4 853.4,278.1 860.1,276.4C867.4,274.5 878.6,266.2 885.9,264.0C892.5,262.0 904.9,260.3 911.7,261.0C918.8,261.7 930.5,268.6 937.5,269.0C944.4,269.4 956.4,265.3 963.3,264.0C970.3,262.7 982.9,257.9 989.2,259.7C996.9,262.0 1007.2,276.5 1015.0,279.2C1021.2,281.4 1034.0,279.0 1040.8,277.9C1047.9,276.7 1059.6,272.4 1066.6,270.8C1073.5,269.2 1085.4,266.7 1092.4,266.0C1099.4,265.3 1111.5,267.0 1118.3,265.7C1125.5,264.3 1137.4,258.9 1144.1,255.7C1151.3,252.2 1162.5,242.2 1169.9,240.8C1176.4,239.6 1188.8,246.3 1195.7,246.0C1202.8,245.7 1215.2,241.9 1221.5,238.7C1229.1,234.8 1240.4,219.6 1247.4,219.7C1254.4,219.8 1265.8,238.4 1273.2,239.4C1279.7,240.3 1291.9,230.0 1299.0,226.9C1305.8,223.9 1317.7,217.7 1324.8,217.0C1331.6,216.3 1343.7,220.5 1350.6,221.8C1357.6,223.1 1369.5,225.6 1376.5,226.9C1383.4,228.2 1395.3,230.9 1402.3,231.5C1409.2,232.1 1421.3,230.0 1428.1,231.1C1435.3,232.3 1446.9,237.5 1453.9,239.8L1453.9,468.5L8.0,468.5Z" fill="#2196f3" fill-opacity="0.05"/><path d="M8.0,460.8C15.0,460.0 26.9,458.6 33.8,457.8C40.8,457.0 52.7,455.4 59.6,454.6C66.6,453.8 78.5,451.9 85.5,451.7C92.4,451.5 104.3,453.2 111.3,453.0C118.3,452.8 130.1,451.1 137.1,450.2C144.1,449.3 156.0,447.5 162.9,446.5C169.9,445.5 181.9,444.2 188.7,442.7C195.8,441.2 207.5,437.1 214.6,435.5C221.5,433.9 233.3,431.3 240.4,430.6C247.3,429.9 259.3,430.8 266.2,430.0C273.2,429.2 285.1,426.2 292.0,424.6C299.0,422.9 310.9,419.7 317.8,417.7C324.9,415.6 336.6,411.3 343.7,409.5C350.5,407.7 363.0,407.0 369.5,404.5C376.9,401.6 387.8,391.5 395.3,389.4C401.8,387.6 414.9,392.4 421.1,390.2C428.8,387.5 439.2,373.9 446.9,371.4C453.2,369.4 466.7,375.9 472.8,373.6C480.7,370.5 491.0,352.7 498.6,351.3C505.0,350.1 517.2,363.1 524.4,364.0C531.1,364.8 543.3,359.5 550.2,357.5C557.3,355.5 569.0,351.3 576.0,349.3C583.0,347.3 594.9,344.6 601.9,342.7C608.9,340.8 620.8,337.6 627.7,335.4C634.7,333.2 646.6,328.8 653.5,326.3C660.5,323.7 672.2,318.5 679.3,316.5C686.1,314.6 698.1,312.5 705.1,311.6C712.1,310.7 724.2,308.5 731.0,309.6C738.2,310.7 750.0,316.6 756.8,319.8C763.9,323.1 775.2,331.5 782.6,333.6C789.1,335.5 801.7,335.9 808.4,334.7C815.7,333.4 827.0,326.0 834.2,324.3C841.0,322.7 853.1,323.1 860.1,322.5C867.0,321.9 879.2,318.5 885.9,319.5C893.1,320.5 904.6,327.7 911.7,330.0C918.5,332.2 930.5,334.9 937.5,336.0C944.4,337.0 956.5,336.5 963.3,337.8C970.5,339.2 982.2,345.9 989.2,345.8C996.2,345.7 1008.0,337.1 1015.0,336.9C1021.9,336.7 1034.0,341.7 1040.8,344.3C1048.0,347.0 1059.3,355.1 1066.6,356.4C1073.3,357.5 1085.4,353.6 1092.4,353.2C1099.4,352.8 1111.6,351.6 1118.3,353.1C1125.6,354.8 1137.0,364.9 1144.1,365.1C1151.0,365.3 1162.7,355.9 1169.9,354.7C1176.6,353.6 1188.7,356.8 1195.7,356.8C1202.7,356.8 1214.9,356.5 1221.5,354.7C1228.8,352.7 1240.2,345.6 1247.4,342.9C1254.1,340.4 1266.1,335.9 1273.2,335.5C1280.1,335.1 1292.0,339.4 1299.0,339.8C1305.9,340.2 1317.9,339.2 1324.8,338.2C1331.9,337.2 1343.7,332.3 1350.6,332.6C1357.7,332.9 1369.3,339.3 1376.5,340.2C1383.3,341.1 1396.3,336.7 1402.3,339.2C1410.2,342.6 1420.5,356.9 1428.1,362.0C1434.4,366.3 1446.9,370.8 1453.9,374.0L1453.9,468.5L8.0,468.5Z" fill="#2196f3" fill-opacity="0.065"/><path d="M8.0,461.3C15.0,460.8 26.8,459.8 33.8,459.3C40.8,458.8 52.7,458.3 59.6,457.8C66.6,457.3 78.5,455.7 85.5,455.3C92.4,454.9 104.3,455.4 111.3,455.0C118.3,454.6 130.2,453.4 137.1,452.5C144.1,451.6 155.9,448.8 162.9,448.0C169.8,447.2 181.8,447.5 188.7,446.7C195.8,445.9 207.5,443.0 214.6,442.2C221.5,441.4 233.4,440.8 240.4,440.6C247.3,440.4 259.3,441.3 266.2,440.9C273.2,440.5 285.2,439.3 292.0,437.7C299.2,436.0 310.7,429.8 317.8,428.4C324.6,427.1 336.7,427.9 343.7,427.4C350.6,426.9 362.5,425.4 369.5,424.6C376.5,423.8 388.7,423.4 395.3,421.3C402.6,419.0 413.8,410.7 421.1,408.2C427.8,405.9 440.0,404.6 446.9,403.3C453.9,402.0 465.9,400.1 472.8,398.4C479.8,396.7 491.6,392.8 498.6,390.6C505.6,388.4 517.6,384.7 524.4,382.0C531.5,379.3 543.3,373.9 550.2,370.6C557.3,367.3 568.7,360.1 576.0,357.5C582.7,355.2 594.9,354.1 601.9,352.5C608.9,350.9 620.7,345.9 627.7,345.7C634.6,345.5 646.6,349.3 653.5,350.9C660.5,352.5 672.4,355.5 679.3,357.5C686.3,359.5 698.0,363.9 705.1,365.6C712.0,367.2 724.0,368.7 731.0,369.7C737.9,370.7 749.8,372.3 756.8,373.0C763.7,373.6 775.6,374.4 782.6,374.5C789.6,374.6 801.5,374.1 808.4,373.6C815.4,373.1 827.3,371.5 834.2,370.6C841.2,369.7 853.8,365.3 860.1,367.1C867.7,369.3 878.2,383.1 885.9,385.7C892.1,387.8 904.7,385.0 911.7,384.7C918.7,384.4 931.0,381.7 937.5,383.3C944.9,385.1 956.0,395.7 963.3,397.2C969.9,398.5 982.2,394.2 989.2,393.5C996.1,392.8 1008.0,391.6 1015.0,392.0C1022.0,392.4 1033.8,396.1 1040.8,396.2C1047.8,396.3 1059.7,392.7 1066.6,393.1C1073.7,393.5 1085.7,396.7 1092.4,399.1C1099.7,401.6 1110.9,409.9 1118.3,411.3C1124.9,412.6 1137.1,409.4 1144.1,409.2C1151.0,409.0 1163.0,409.0 1169.9,409.6C1176.9,410.2 1188.7,413.7 1195.7,413.8C1202.7,413.9 1214.7,409.8 1221.5,410.3C1228.6,410.8 1240.4,415.7 1247.4,417.5C1254.3,419.3 1266.4,421.5 1273.2,423.7C1280.3,426.1 1292.2,431.3 1299.0,434.5C1306.1,437.8 1317.6,444.8 1324.8,448.0C1331.6,451.0 1343.7,454.8 1350.6,457.3L1350.6,468.5L8.0,468.5Z" fill="#ef5350" fill-opacity="0.06"/><path d="M8.0,460.5C15.0,459.4 26.9,457.7 33.8,456.5C40.8,455.3 52.7,452.9 59.6,451.7C66.6,450.5 78.4,448.2 85.5,447.5C92.4,446.8 104.4,447.6 111.3,446.7C118.3,445.8 130.1,442.7 137.1,441.1C144.1,439.5 155.9,436.6 162.9,435.1C169.9,433.6 182.0,432.3 188.7,430.2C196.0,427.9 207.4,421.4 214.6,418.8C221.4,416.3 233.4,413.3 240.4,411.5C247.3,409.7 259.3,407.4 266.2,405.4C273.3,403.4 285.1,399.2 292.0,396.8C299.0,394.4 311.0,390.6 317.8,387.8C325.0,384.9 336.9,379.2 343.7,375.5C350.8,371.7 362.2,363.5 369.5,360.0C376.1,356.9 388.4,353.7 395.3,351.0C402.4,348.2 414.0,342.1 421.1,339.5C427.9,337.0 440.2,334.8 446.9,332.2C454.2,329.3 465.6,322.3 472.8,319.1C479.6,316.1 491.6,311.8 498.6,309.2C505.5,306.6 517.8,303.3 524.4,300.1C531.7,296.6 542.8,287.5 550.2,284.6C556.7,282.1 569.0,280.3 576.0,280.0C583.0,279.7 595.4,283.8 601.9,282.1C609.4,280.1 620.2,269.2 627.7,266.1C634.2,263.4 646.5,262.2 653.5,260.8C660.5,259.4 672.6,254.6 679.3,255.5C686.6,256.5 698.2,267.9 705.1,267.7C712.2,267.5 723.8,257.3 731.0,254.0C737.7,250.9 750.2,247.5 756.8,244.1C764.1,240.3 775.2,228.4 782.6,227.2C789.1,226.1 801.5,233.1 808.4,235.6C815.5,238.2 827.9,247.4 834.2,246.0C841.9,244.3 852.8,229.9 860.1,224.4C866.7,219.4 878.6,211.3 885.9,207.2C892.5,203.5 904.9,199.2 911.7,195.7C918.9,192.0 930.0,182.6 937.5,180.5C944.0,178.7 956.7,182.4 963.3,180.9C970.7,179.2 982.6,172.8 989.2,168.8C996.6,164.3 1007.2,152.4 1015.0,149.3C1021.2,146.9 1034.5,146.4 1040.8,148.4C1048.4,150.9 1059.8,166.3 1066.6,166.0C1073.7,165.7 1084.7,149.5 1092.4,146.5C1098.6,144.1 1111.9,148.1 1118.3,145.9C1125.9,143.2 1136.8,129.3 1144.1,128.5C1150.7,127.7 1162.9,136.8 1169.9,139.9C1176.9,142.9 1188.7,148.1 1195.7,151.1C1202.7,154.1 1214.3,160.9 1221.5,162.1C1228.2,163.2 1240.4,159.2 1247.4,159.6C1254.4,160.0 1266.8,166.3 1273.2,164.8C1280.7,163.0 1291.4,149.8 1299.0,147.2C1305.3,145.0 1317.9,147.7 1324.8,146.9C1331.9,146.1 1345.4,145.5 1350.6,141.4C1359.3,134.6 1368.3,109.4 1376.5,106.5C1382.2,104.5 1396.8,125.8 1402.3,123.3C1410.7,119.5 1419.8,92.8 1428.1,83.3C1433.7,76.9 1446.9,69.4 1453.9,64.3" fill="none" stroke="#2196f3" stroke-width="2.2" stroke-linejoin="round"/><path d="M8.0,460.7C15.0,459.7 26.9,458.1 33.8,457.1C40.8,456.1 52.7,454.4 59.6,453.4C66.6,452.4 78.5,450.6 85.5,449.9C92.4,449.2 104.3,449.2 111.3,448.4C118.3,447.6 130.1,445.4 137.1,444.3C144.1,443.2 156.0,441.3 162.9,440.2C169.9,439.1 181.9,437.5 188.7,435.8C195.9,434.0 207.4,428.8 214.6,427.0C221.4,425.3 233.5,424.4 240.4,423.0C247.4,421.6 259.3,418.4 266.2,416.4C273.2,414.4 285.0,410.4 292.0,408.2C299.0,406.0 310.9,402.3 317.8,400.1C324.8,397.9 336.7,394.2 343.7,391.9C350.7,389.6 362.5,385.4 369.5,382.9C376.5,380.3 388.4,375.9 395.3,373.1C402.3,370.3 414.0,364.8 421.1,362.4C427.9,360.1 440.3,358.4 446.9,355.9C454.2,353.1 465.7,346.1 472.8,342.8C479.6,339.6 491.8,335.4 498.6,332.0C505.8,328.4 516.9,319.0 524.4,316.9C530.9,315.1 543.5,319.1 550.2,317.8C557.5,316.4 568.9,309.4 576.0,306.7C582.9,304.1 595.0,298.1 601.9,298.5C609.0,299.0 620.6,309.5 627.7,310.0C634.5,310.4 646.4,303.3 653.5,301.8C660.3,300.4 672.3,299.7 679.3,299.3C686.3,298.9 698.6,300.8 705.1,299.0C712.5,297.0 723.6,287.8 731.0,285.4C737.5,283.2 749.8,282.7 756.8,282.1C763.7,281.5 775.6,280.8 782.6,281.0C789.6,281.2 801.5,283.9 808.4,283.4C815.5,282.9 827.2,278.3 834.2,277.3C841.1,276.4 853.4,278.1 860.1,276.4C867.4,274.5 878.6,266.2 885.9,264.0C892.5,262.0 904.9,260.3 911.7,261.0C918.8,261.7 930.5,268.6 937.5,269.0C944.4,269.4 956.4,265.3 963.3,264.0C970.3,262.7 982.9,257.9 989.2,259.7C996.9,262.0 1007.2,276.5 1015.0,279.2C1021.2,281.4 1034.0,279.0 1040.8,277.9C1047.9,276.7 1059.6,272.4 1066.6,270.8C1073.5,269.2 1085.4,266.7 1092.4,266.0C1099.4,265.3 1111.5,267.0 1118.3,265.7C1125.5,264.3 1137.4,258.9 1144.1,255.7C1151.3,252.2 1162.5,242.2 1169.9,240.8C1176.4,239.6 1188.8,246.3 1195.7,246.0C1202.8,245.7 1215.2,241.9 1221.5,238.7C1229.1,234.8 1240.4,219.6 1247.4,219.7C1254.4,219.8 1265.8,238.4 1273.2,239.4C1279.7,240.3 1291.9,230.0 1299.0,226.9C1305.8,223.9 1317.7,217.7 1324.8,217.0C1331.6,216.3 1343.7,220.5 1350.6,221.8C1357.6,223.1 1369.5,225.6 1376.5,226.9C1383.4,228.2 1395.3,230.9 1402.3,231.5C1409.2,232.1 1421.3,230.0 1428.1,231.1C1435.3,232.3 1446.9,237.5 1453.9,239.8" fill="none" stroke="#2196f3" stroke-width="2.2" stroke-linejoin="round"/><path d="M8.0,460.8C15.0,460.0 26.9,458.6 33.8,457.8C40.8,457.0 52.7,455.4 59.6,454.6C66.6,453.8 78.5,451.9 85.5,451.7C92.4,451.5 104.3,453.2 111.3,453.0C118.3,452.8 130.1,451.1 137.1,450.2C144.1,449.3 156.0,447.5 162.9,446.5C169.9,445.5 181.9,444.2 188.7,442.7C195.8,441.2 207.5,437.1 214.6,435.5C221.5,433.9 233.3,431.3 240.4,430.6C247.3,429.9 259.3,430.8 266.2,430.0C273.2,429.2 285.1,426.2 292.0,424.6C299.0,422.9 310.9,419.7 317.8,417.7C324.9,415.6 336.6,411.3 343.7,409.5C350.5,407.7 363.0,407.0 369.5,404.5C376.9,401.6 387.8,391.5 395.3,389.4C401.8,387.6 414.9,392.4 421.1,390.2C428.8,387.5 439.2,373.9 446.9,371.4C453.2,369.4 466.7,375.9 472.8,373.6C480.7,370.5 491.0,352.7 498.6,351.3C505.0,350.1 517.2,363.1 524.4,364.0C531.1,364.8 543.3,359.5 550.2,357.5C557.3,355.5 569.0,351.3 576.0,349.3C583.0,347.3 594.9,344.6 601.9,342.7C608.9,340.8 620.8,337.6 627.7,335.4C634.7,333.2 646.6,328.8 653.5,326.3C660.5,323.7 672.2,318.5 679.3,316.5C686.1,314.6 698.1,312.5 705.1,311.6C712.1,310.7 724.2,308.5 731.0,309.6C738.2,310.7 750.0,316.6 756.8,319.8C763.9,323.1 775.2,331.5 782.6,333.6C789.1,335.5 801.7,335.9 808.4,334.7C815.7,333.4 827.0,326.0 834.2,324.3C841.0,322.7 853.1,323.1 860.1,322.5C867.0,321.9 879.2,318.5 885.9,319.5C893.1,320.5 904.6,327.7 911.7,330.0C918.5,332.2 930.5,334.9 937.5,336.0C944.4,337.0 956.5,336.5 963.3,337.8C970.5,339.2 982.2,345.9 989.2,345.8C996.2,345.7 1008.0,337.1 1015.0,336.9C1021.9,336.7 1034.0,341.7 1040.8,344.3C1048.0,347.0 1059.3,355.1 1066.6,356.4C1073.3,357.5 1085.4,353.6 1092.4,353.2C1099.4,352.8 1111.6,351.6 1118.3,353.1C1125.6,354.8 1137.0,364.9 1144.1,365.1C1151.0,365.3 1162.7,355.9 1169.9,354.7C1176.6,353.6 1188.7,356.8 1195.7,356.8C1202.7,356.8 1214.9,356.5 1221.5,354.7C1228.8,352.7 1240.2,345.6 1247.4,342.9C1254.1,340.4 1266.1,335.9 1273.2,335.5C1280.1,335.1 1292.0,339.4 1299.0,339.8C1305.9,340.2 1317.9,339.2 1324.8,338.2C1331.9,337.2 1343.7,332.3 1350.6,332.6C1357.7,332.9 1369.3,339.3 1376.5,340.2C1383.3,341.1 1396.3,336.7 1402.3,339.2C1410.2,342.6 1420.5,356.9 1428.1,362.0C1434.4,366.3 1446.9,370.8 1453.9,374.0" fill="none" stroke="#2196f3" stroke-width="2.2" stroke-linejoin="round"/><path d="M8.0,461.3C15.0,460.8 26.8,459.8 33.8,459.3C40.8,458.8 52.7,458.3 59.6,457.8C66.6,457.3 78.5,455.7 85.5,455.3C92.4,454.9 104.3,455.4 111.3,455.0C118.3,454.6 130.2,453.4 137.1,452.5C144.1,451.6 155.9,448.8 162.9,448.0C169.8,447.2 181.8,447.5 188.7,446.7C195.8,445.9 207.5,443.0 214.6,442.2C221.5,441.4 233.4,440.8 240.4,440.6C247.3,440.4 259.3,441.3 266.2,440.9C273.2,440.5 285.2,439.3 292.0,437.7C299.2,436.0 310.7,429.8 317.8,428.4C324.6,427.1 336.7,427.9 343.7,427.4C350.6,426.9 362.5,425.4 369.5,424.6C376.5,423.8 388.7,423.4 395.3,421.3C402.6,419.0 413.8,410.7 421.1,408.2C427.8,405.9 440.0,404.6 446.9,403.3C453.9,402.0 465.9,400.1 472.8,398.4C479.8,396.7 491.6,392.8 498.6,390.6C505.6,388.4 517.6,384.7 524.4,382.0C531.5,379.3 543.3,373.9 550.2,370.6C557.3,367.3 568.7,360.1 576.0,357.5C582.7,355.2 594.9,354.1 601.9,352.5C608.9,350.9 620.7,345.9 627.7,345.7C634.6,345.5 646.6,349.3 653.5,350.9C660.5,352.5 672.4,355.5 679.3,357.5C686.3,359.5 698.0,363.9 705.1,365.6C712.0,367.2 724.0,368.7 731.0,369.7C737.9,370.7 749.8,372.3 756.8,373.0C763.7,373.6 775.6,374.4 782.6,374.5C789.6,374.6 801.5,374.1 808.4,373.6C815.4,373.1 827.3,371.5 834.2,370.6C841.2,369.7 853.8,365.3 860.1,367.1C867.7,369.3 878.2,383.1 885.9,385.7C892.1,387.8 904.7,385.0 911.7,384.7C918.7,384.4 931.0,381.7 937.5,383.3C944.9,385.1 956.0,395.7 963.3,397.2C969.9,398.5 982.2,394.2 989.2,393.5C996.1,392.8 1008.0,391.6 1015.0,392.0C1022.0,392.4 1033.8,396.1 1040.8,396.2C1047.8,396.3 1059.7,392.7 1066.6,393.1C1073.7,393.5 1085.7,396.7 1092.4,399.1C1099.7,401.6 1110.9,409.9 1118.3,411.3C1124.9,412.6 1137.1,409.4 1144.1,409.2C1151.0,409.0 1163.0,409.0 1169.9,409.6C1176.9,410.2 1188.7,413.7 1195.7,413.8C1202.7,413.9 1214.7,409.8 1221.5,410.3C1228.6,410.8 1240.4,415.7 1247.4,417.5C1254.3,419.3 1266.4,421.5 1273.2,423.7C1280.3,426.1 1292.2,431.3 1299.0,434.5C1306.1,437.8 1317.6,444.8 1324.8,448.0C1331.6,451.0 1343.7,454.8 1350.6,457.3" fill="none" stroke="#ef5350" stroke-width="2.2" stroke-linejoin="round"/></g><rect x="833.8499999999999" y="9" width="2.25" height="460" fill="#b2b2b2"/></svg>
<div style="position:absolute;left:363px;top:759.5px;width:24px;height:24px;border-radius:12px;background:#ab47bc"></div><svg class="ic" style="left:366.2px;top:762.8px;" width="17.5" height="17.5" viewBox="0 0 24 24"><path d="M12,2A3,3 0 0,1 15,5A3,3 0 0,1 12,8A3,3 0 0,1 9,5A3,3 0 0,1 12,2M11,22H8V16H6V9H18V16H16V22H13V18H11V22Z" fill="#fff"/></svg>
<div style="position:absolute;left:389.3px;top:758.6px;width:24px;height:24px;border-radius:12px;background:#7e57c2"></div><svg class="ic" style="left:392.6px;top:761.9px;" width="17.5" height="17.5" viewBox="0 0 24 24"><path d="M12,3 L2,12 H5 V20 H13 V14 H19 V12 H22 Z" fill="#fff"/><circle cx="15.7" cy="16.6" r="5.3" fill="#7e57c2"/><circle cx="15.7" cy="16.6" r="3.1" fill="none" stroke="#fff" stroke-width="1.8"/><path d="M18,19 L21.6,22.6" stroke="#fff" stroke-width="2" stroke-linecap="round"/></svg>
<div style="position:absolute;left:440.8px;top:746.8px;width:24px;height:24px;border-radius:12px;background:#ab47bc"></div><svg class="ic" style="left:444.1px;top:750.0px;" width="17.5" height="17.5" viewBox="0 0 24 24"><path d="M12,2A3,3 0 0,1 15,5A3,3 0 0,1 12,8A3,3 0 0,1 9,5A3,3 0 0,1 12,2M11,22H8V16H6V9H18V16H16V22H13V18H11V22Z" fill="#fff"/></svg>
<div style="position:absolute;left:1732px;top:377px;width:22px;height:24px;overflow:hidden"><div style="width:24px;height:24px;border-radius:12px;background:#78909c"></div></div>
<svg class="ic" style="left:1735.6px;top:381.0px;clip-path:inset(0 0 0 0)" width="16" height="16" viewBox="0 0 24 24"><path d="M7.5,4A5.5,5.5 0 0,0 2,9.5C2,10 2.09,10.5 2.22,11H6.3L7.57,7.63C7.87,6.83 9.05,6.75 9.43,7.63L11.5,13L12.09,11.58C12.22,11.25 12.57,11 13,11H21.78C21.91,10.5 22,10 22,9.5A5.5,5.5 0 0,0 16.5,4C14.64,4 13,4.93 12,6.34C11,4.93 9.36,4 7.5,4V4M3,12.5A1,1 0 0,0 2,13.5A1,1 0 0,0 3,14.5H5.44L11,20C12,20.9 12,20.9 13,20L18.56,14.5H21A1,1 0 0,0 22,13.5A1,1 0 0,0 21,12.5H13.4L12.47,14.8C12.07,15.81 10.92,15.67 10.55,14.83L8.5,9.5L7.54,11.83C7.39,12.21 7.05,12.5 6.6,12.5H3Z" fill="#fff"/></svg>
<div style="position:absolute;left:1691px;top:412px;width:36px;height:108px;border-radius:18px;background:rgba(66,66,66,0.9);box-shadow:0 2px 4px rgba(0,0,0,.3)"></div>
<svg class="ic" style="left:1702.7px;top:424.5px" width="12" height="12" viewBox="0 0 12 12"><path d="M6,0.6V11.4M0.6,6H11.4" stroke="#fff" stroke-width="1.3" fill="none"/></svg>
<svg class="ic" style="left:1700.2px;top:457.8px;" width="17" height="17" viewBox="0 0 24 24"><path d="M9.5,13.1 L10.9,14.5 L6.4,19 H10 V21 H3 V14 H5 V17.6 Z M14.5,10.9 L13.1,9.5 L17.6,5 H14 V3 H21 V10 H19 V6.4 Z M10.9,9.5 L9.5,10.9 L5,6.4 V10 H3 V3 H10 V5 H6.4 Z M13.1,14.5 L14.5,13.1 L19,17.6 V14 H21 V21 H14 V19 H17.6 Z" fill="#fff"/></svg>
<svg class="ic" style="left:1702.7px;top:496px" width="12" height="12" viewBox="0 0 12 12"><path d="M0.6,6H11.4" stroke="#fff" stroke-width="1.3" fill="none"/></svg>
<div style="position:absolute;left:920.7px;top:614px;width:187.8px;height:186px;border-radius:14px;background:rgba(45,45,45,0.93);box-shadow:0 3px 10px rgba(0,0,0,.25)"></div>
<svg class="ic" style="left:932.9px;top:626.8px;" width="20" height="20" viewBox="0 0 24 24"><path d="M19.46,9.92 A9,9 0 1,1 14.8,4.84" fill="none" stroke="#7b8f99" stroke-width="2"/><path d="M2.1,12.6 C5.6,12.1 8.6,10 10,6.6 C12,9.9 15.4,11.8 19.9,12 L19.4,9.6 L15,4.6 L11,4 L6,5.6 L2.8,9.4 Z" fill="#7b8f99"/><circle cx="8" cy="14.2" r="1.25" fill="#7b8f99"/><circle cx="14" cy="14.2" r="1.25" fill="#7b8f99"/><path d="M18.8,1.6 L19.9,4.1 L22.4,5.2 L19.9,6.3 L18.8,8.8 L17.7,6.3 L15.2,5.2 L17.7,4.1 Z" fill="#7b8f99"/></svg>
<div class="t " style="left:959.5px;top:637px;font-size:12px;color:#7b8f99;letter-spacing:-0.369px">Age 61</div>
<svg class="ic" style="left:932.9px;top:652.8px;" width="20" height="20" viewBox="0 0 24 24"><path d="M19.46,9.92 A9,9 0 1,1 14.8,4.84" fill="none" stroke="#7b8f99" stroke-width="2"/><path d="M2.1,12.6 C5.6,12.1 8.6,10 10,6.6 C12,9.9 15.4,11.8 19.9,12 L19.4,9.6 L15,4.6 L11,4 L6,5.6 L2.8,9.4 Z" fill="#7b8f99"/><circle cx="8" cy="14.2" r="1.25" fill="#7b8f99"/><circle cx="14" cy="14.2" r="1.25" fill="#7b8f99"/><path d="M18.8,1.6 L19.9,4.1 L22.4,5.2 L19.9,6.3 L18.8,8.8 L17.7,6.3 L15.2,5.2 L17.7,4.1 Z" fill="#7b8f99"/></svg>
<div class="t " style="left:959.5px;top:663px;font-size:12px;color:#7b8f99;letter-spacing:-0.229px">Age 59</div>
<svg class="ic" style="left:932.5px;top:679.5px;" width="18" height="18" viewBox="0 0 24 24"><path d="M19,19H5V8H19M16,1V3H8V1H6V3H5C3.89,3 3,3.89 3,5V19A2,2 0 0,0 5,21H19A2,2 0 0,0 21,19V5C21,3.89 20.1,3 19,3H18V1M17,12H12V17H17V12Z" fill="#f0f0f0"/></svg>
<div class="t " style="left:960px;top:689px;font-size:12px;color:#ececec;letter-spacing:0.019px">Jul 31, 2054</div>
<div style="position:absolute;left:934px;top:707.0px;width:15px;height:15px;border-radius:4px;background:#2a76b9"></div>
<div class="t " style="left:960.3px;top:713.7px;font-size:11px;color:#ececec;letter-spacing:-0.121px">Top 25%: $4,365,030</div>
<div style="position:absolute;left:934px;top:729.0px;width:15px;height:15px;border-radius:4px;background:#2a76b9"></div>
<div class="t " style="left:960.3px;top:735.7px;font-size:11px;color:#ececec;letter-spacing:-0.062px">Median: $3,750,263</div>
<div style="position:absolute;left:934px;top:751.0px;width:15px;height:15px;border-radius:4px;background:#2a76b9"></div>
<div class="t " style="left:960.3px;top:757.7px;font-size:11px;color:#ececec;letter-spacing:-0.057px">Bottom 25%: $2,823,567</div>
<div style="position:absolute;left:934px;top:773.0px;width:15px;height:15px;border-radius:4px;background:#b24848"></div>
<div class="t " style="left:960.3px;top:779.7px;font-size:11px;color:#ececec;letter-spacing:-0.057px">Bottom 10%: $1,923,193</div>
<div class="t b" style="left:298px;top:902px;font-size:17.5px;letter-spacing:-0.024px">Stats</div>
<svg class="ic" style="left:346.0px;top:892.0px;" width="20" height="20" viewBox="0 0 24 24"><path d="M11,9H13V7H11M12,20C7.59,20 4,16.41 4,12C4,7.59 7.59,4 12,4C16.41,4 20,7.59 20,12C20,16.41 16.41,20 12,20M12,2A10,10 0 0,0 2,12A10,10 0 0,0 12,22A10,10 0 0,0 22,12A10,10 0 0,0 12,2M11,17H13V11H11V17Z" fill="#fff"/></svg>
<div class="card" style="left:298px;top:930px;width:716px;height:242px;border-radius:4px">
<div class="t " style="left:16.5px;top:87px;font-size:14px;color:#f0f0f0;letter-spacing:0.116px">Median</div>
<div class="t " style="left:460.3px;top:87px;font-size:14px;color:#f0f0f0;letter-spacing:0.021px">$131.56K</div>
<div class="row" style="top:103px"></div>
<div class="t " style="left:16.5px;top:119px;font-size:14px;color:#f0f0f0;letter-spacing:-0.218px">Average</div>
<div class="t " style="left:460.3px;top:119px;font-size:14px;color:#f0f0f0;letter-spacing:0.021px">$131.86K</div>
<div class="row" style="top:135px"></div>
<div class="t " style="left:16.5px;top:151px;font-size:14px;color:#f0f0f0;letter-spacing:-0.005px">Standard Deviation</div>
<div class="t " style="left:460.3px;top:151px;font-size:14px;color:#f0f0f0;letter-spacing:-0.062px">$29.05K</div>
<div class="row" style="top:167px"></div>
<div class="t " style="left:16.5px;top:183px;font-size:14px;color:#f0f0f0;letter-spacing:0.087px">Smallest</div>
<div class="t " style="left:460.3px;top:183px;font-size:14px;color:#f0f0f0;letter-spacing:-0.062px">$68.23K</div>
<div class="row" style="top:199px"></div>
<div class="t " style="left:16.5px;top:216px;font-size:14px;color:#f0f0f0;letter-spacing:0.033px">Largest</div>
<div class="t " style="left:460.3px;top:216px;font-size:14px;color:#f0f0f0;letter-spacing:0.021px">$251.68K</div>
</div>
<div class="card" style="left:1034px;top:930px;width:717px;height:242px;border-radius:4px">
<div class="t " style="left:16.5px;top:87px;font-size:14px;color:#f0f0f0;letter-spacing:0.116px">Median</div>
<div class="t " style="left:460.3px;top:87px;font-size:14px;color:#f0f0f0;letter-spacing:0.021px">$134.86K</div>
<div class="row" style="top:103px"></div>
<div class="t " style="left:16.5px;top:119px;font-size:14px;color:#f0f0f0;letter-spacing:-0.218px">Average</div>
<div class="t " style="left:460.3px;top:119px;font-size:14px;color:#f0f0f0;letter-spacing:0.021px">$144.58K</div>
<div class="row" style="top:135px"></div>
<div class="t " style="left:16.5px;top:151px;font-size:14px;color:#f0f0f0;letter-spacing:-0.005px">Standard Deviation</div>
<div class="t " style="left:460.3px;top:151px;font-size:14px;color:#f0f0f0;letter-spacing:-0.062px">$35.28K</div>
<div class="row" style="top:167px"></div>
<div class="t " style="left:16.5px;top:183px;font-size:14px;color:#f0f0f0;letter-spacing:0.087px">Smallest</div>
<div class="t " style="left:460.3px;top:183px;font-size:14px;color:#f0f0f0;letter-spacing:-0.155px">$80.2K</div>
<div class="row" style="top:199px"></div>
<div class="t " style="left:16.5px;top:216px;font-size:14px;color:#f0f0f0;letter-spacing:0.033px">Largest</div>
<div class="t " style="left:460.3px;top:216px;font-size:14px;color:#f0f0f0;letter-spacing:-0.062px">$255.4K</div>
</div>
<div class="btn" style="left:315px;top:947px;width:151px;height:40px"></div>
<div class="t b" style="left:327.7px;top:967.5px;font-size:13.5px;letter-spacing:0.012px">Total Expenses</div>
<svg class="ic" style="left:430.0px;top:956.0px;" width="24" height="24" viewBox="0 0 24 24"><path d="M7,10L12,15L17,10H7Z" fill="#fff"/></svg>
<div class="t b" style="left:478px;top:967.5px;font-size:13.5px;letter-spacing:0.207px">before</div>
<div class="btn" style="left:529px;top:947px;width:149px;height:40px"></div>
<svg class="ic" style="left:542.0px;top:958.2px;" width="16.5" height="16.5" viewBox="0 0 24 24"><g fill="none" stroke="#26a69a" stroke-width="1.7" stroke-linecap="round"><path d="M13.3,9 C11,7 7.4,7.4 5.4,10.2"/><path d="M13.3,9 C10.6,9 8.8,11 8.6,13.8"/><path d="M13.3,9 C15.4,6.9 18.9,7.2 20.6,10"/><path d="M13.3,9 C16.1,9.2 17.8,11.2 17.9,13.8"/><path d="M13.3,9 C12.8,6.5 11,4.5 8.6,3.8"/><path d="M13.3,9 C14,6.6 15.8,4.9 18.2,4.4"/></g><path d="M9.2,22 C9.9,17 11.2,12.6 12.6,9.3 L14.5,10 C13.4,13.4 12.7,17.6 12.8,22 Z" fill="#26a69a"/></svg>
<div class="t m" style="left:565px;top:965.5px;font-size:14.5px;color:#26a69a;letter-spacing:0.275px">Retirement</div>
<svg class="ic" style="left:642.0px;top:956.0px;" width="24" height="24" viewBox="0 0 24 24"><path d="M7,10L12,15L17,10H7Z" fill="#fff"/></svg>
<div class="t b" style="left:1051.5px;top:967.5px;font-size:13.75px;letter-spacing:0.006px">Total Expenses after <span style="color:#26a69a">Retirement</span></div>
</div></body></html>
